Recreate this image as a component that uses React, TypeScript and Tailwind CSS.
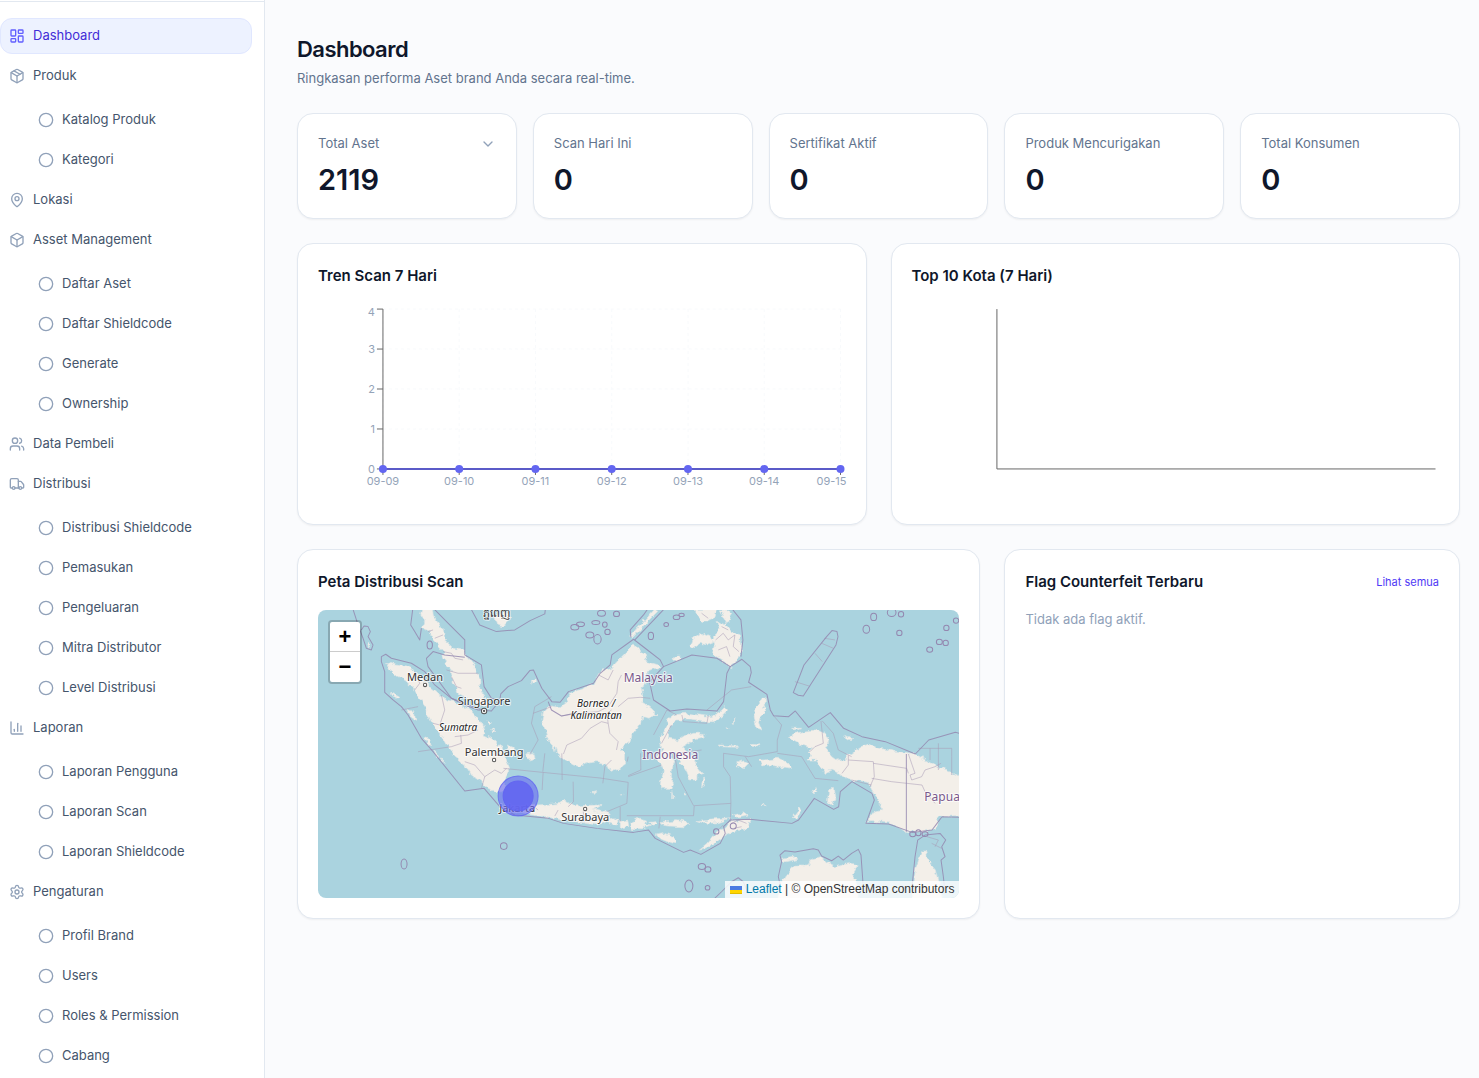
import {
  Box,
  ChartColumn,
  ChevronDown,
  Circle,
  LayoutDashboard,
  MapPin,
  Package,
  Settings,
  Truck,
  Users,
  type LucideIcon,
} from 'lucide-react';

interface MenuItem {
  label: string;
  icon: LucideIcon;
  active?: boolean;
  children?: string[];
}

const menu: MenuItem[] = [
  { label: 'Dashboard', icon: LayoutDashboard, active: true },
  { label: 'Produk', icon: Package, children: ['Katalog Produk', 'Kategori'] },
  { label: 'Lokasi', icon: MapPin },
  {
    label: 'Asset Management',
    icon: Box,
    children: ['Daftar Aset', 'Daftar Shieldcode', 'Generate', 'Ownership'],
  },
  { label: 'Data Pembeli', icon: Users },
  {
    label: 'Distribusi',
    icon: Truck,
    children: ['Distribusi Shieldcode', 'Pemasukan', 'Pengeluaran', 'Mitra Distributor', 'Level Distribusi'],
  },
  {
    label: 'Laporan',
    icon: ChartColumn,
    children: ['Laporan Pengguna', 'Laporan Scan', 'Laporan Shieldcode'],
  },
  {
    label: 'Pengaturan',
    icon: Settings,
    children: ['Profil Brand', 'Users', 'Roles & Permission', 'Cabang'],
  },
];

const stats = [
  { label: 'Total Aset', value: 2119, expandable: true },
  { label: 'Scan Hari Ini', value: 0 },
  { label: 'Sertifikat Aktif', value: 0 },
  { label: 'Produk Mencurigakan', value: 0 },
  { label: 'Total Konsumen', value: 0 },
];

const days = ['09-09', '09-10', '09-11', '09-12', '09-13', '09-14', '09-15'];

function Sidebar() {
  return (
    <aside className="w-[265px] shrink-0 overflow-hidden border-r border-slate-200 bg-white pt-px">
      <nav className="border-t border-slate-200 pt-4 pr-3">
        <ul className="space-y-1">
          {menu.map(({ label, icon: Icon, active, children }) => (
            <li key={label}>
              <a
                href="#"
                className={
                  active
                    ? 'flex h-9 items-center gap-2 rounded-xl border border-indigo-100 bg-[#edf2ff] px-2 text-indigo-700'
                    : 'flex h-9 items-center gap-2 rounded-xl border border-transparent px-2 text-slate-600'
                }
              >
                <Icon className={active ? 'size-4 text-indigo-500' : 'size-4 text-slate-400'} />
                <span className="pb-0.5">{label}</span>
              </a>
              {children && (
                <ul className="mt-2 ml-7 space-y-1">
                  {children.map((child) => (
                    <li key={child}>
                      <a href="#" className="flex h-9 items-center gap-2 px-2.5 text-slate-600">
                        <Circle className="size-4 text-slate-400" />
                        <span className="pb-0.5">{child}</span>
                      </a>
                    </li>
                  ))}
                </ul>
              )}
            </li>
          ))}
        </ul>
      </nav>
    </aside>
  );
}

function Card({ className = '', children }: { className?: string; children: React.ReactNode }) {
  return (
    <section className={`rounded-2xl border border-slate-200 bg-white p-5 shadow-xs ${className}`}>
      {children}
    </section>
  );
}

function CardTitle({ children }: { children: React.ReactNode }) {
  return <h2 className="text-[15px] leading-6 font-semibold text-slate-900">{children}</h2>;
}

function TrendChart() {
  const x = (i: number) => 65 + (i * 458) / 6;
  return (
    <svg viewBox="0 0 528 200" className="mt-1 h-[200px] w-full overflow-visible" role="img" aria-label="Tren Scan 7 Hari">
      <g stroke="#f8fafc" strokeDasharray="3 3">
        {[0, 1, 2, 3].map((i) => (
          <line key={i} x1="65" x2="523" y1={5 + i * 40} y2={5 + i * 40} />
        ))}
        {days.map((d, i) => (
          <line key={d} x1={x(i)} x2={x(i)} y1="5" y2="165" />
        ))}
      </g>
      <g stroke="#666">
        <line x1="65" x2="65" y1="5" y2="165" />
        <line x1="65" x2="523" y1="165" y2="165" />
        {[0, 1, 2, 3, 4].map((i) => (
          <line key={i} x1="59" x2="65" y1={5 + i * 40} y2={5 + i * 40} />
        ))}
        {days.map((d, i) => (
          <line key={d} x1={x(i)} x2={x(i)} y1="165" y2="171" />
        ))}
      </g>
      <g fill="#94a3b8" className="text-[11px]">
        {[4, 3, 2, 1, 0].map((v, i) => (
          <text key={v} x="57" y={i === 0 ? 12 : 9 + i * 40} textAnchor="end">
            {v}
          </text>
        ))}
        {days.map((d, i) => (
          <text key={d} x={i === 6 ? 514 : x(i)} y="181" textAnchor="middle">
            {d}
          </text>
        ))}
      </g>
      <line x1="65" x2="523" y1="165" y2="165" stroke="#5b5bc8" strokeWidth="2" />
      {days.map((d, i) => (
        <circle key={d} cx={x(i)} cy="165" r="4" fill="#6366f1" />
      ))}
    </svg>
  );
}

function CityChart() {
  return (
    <svg viewBox="0 0 528 200" className="mt-1 h-[200px] w-full" role="img" aria-label="Top 10 Kota">
      <path d="M85 5V165H524" fill="none" stroke="#666" />
    </svg>
  );
}

// Coastlines and maritime borders are drawn on a 1923 x 864 grid
const land = [
  // Malay peninsula
  'M315 -20L345 -10 350 25 375 60 380 90 405 115 435 120 445 140 470 170 485 205 485 235 500 265 515 288 490 285 450 265 420 250 405 215 400 185 385 165 375 140 380 125 365 110 345 90 335 65 310 55 320 35 308 15Z',
  // Sumatra
  'M205 157L230 165 265 168 290 185 330 225 370 255 380 270 410 275 450 295 470 315 490 340 500 360 495 375 520 385 540 405 556 415 565 450 575 480 565 495 558 530 552 545 532 545 510 535 490 515 460 495 440 465 410 440 385 402 370 375 350 355 330 315 325 295 300 260 285 235 265 215 240 200 215 180Z',
  // Borneo
  'M946 100L961 120 981 135 986 155 1021 165 1026 175 986 185 981 200 991 215 971 230 976 255 971 275 996 295 1016 315 991 325 971 320 966 345 941 375 936 395 906 415 922 430 922 462 906 472 876 485 866 462 836 455 806 460 786 470 766 465 736 448 716 432 711 412 700 400 686 385 681 355 671 335 676 305 696 285 726 290 746 275 756 250 796 235 826 225 841 195 856 180 881 175 896 155 916 135 936 115Z',
  // Sulawesi
  'M1041 355L1051 325 1066 315 1106 310 1176 320 1206 305 1221 290 1231 300 1211 320 1186 335 1156 335 1116 330 1076 330 1056 345 1051 380 1056 385 1081 390 1096 380 1126 370 1156 370 1161 380 1136 385 1116 395 1091 410 1106 425 1126 440 1136 470 1151 490 1136 495 1136 510 1116 510 1106 485 1086 455 1076 430 1066 420 1056 430 1066 455 1061 470 1056 500 1066 520 1061 538 1031 538 1026 520 1036 480 1026 460 1011 445 1026 425 1031 420 1026 385Z',
  // Java, Madura
  'M545 598L560 585 600 590 656 585 696 583 726 580 736 570 751 578 766 588 841 585 846 588 826 600 866 615 880 630 836 645 796 638 736 630 686 620 600 610Z',
  'M822 600L836 598 866 605 876 612 846 612Z',
  // Bali to Flores
  'M871 628L885 625 900 632 893 648 880 645ZM906 635L928 630 932 652 912 655ZM938 638L960 625 985 630 982 645 1000 648 972 656 940 655ZM992 637L1016 635 1018 642 1000 646ZM1026 638L1076 632 1116 638 1096 650 1050 648 1032 645ZM1136 635L1180 630 1236 626 1200 638 1150 640ZM1245 615L1282 608 1290 615 1250 622Z',
  // Sumba, Timor
  'M1011 672L1036 667 1066 680 1078 692 1066 702 1050 696 1031 688ZM1141 720L1166 700 1181 680 1206 660 1221 655 1236 635 1296 630 1286 655 1246 665 1216 680 1196 695 1156 717Z',
  // Papua
  'M1411 380L1431 370 1461 363 1491 360 1521 370 1531 395 1521 415 1541 438 1561 452 1575 452 1590 436 1626 410 1651 403 1681 415 1720 422 1781 430 1821 450 1881 480 1940 505 1940 614 1881 620 1856 622 1861 640 1851 655 1811 665 1761 665 1721 640 1681 635 1646 635 1666 605 1691 598 1681 570 1661 540 1650 520 1600 510 1571 495 1541 480 1521 490 1496 450 1466 450 1481 437 1466 425 1486 415 1450 405 1430 395Z',
  // Northern Australia
  'M1376 880L1386 825 1400 800 1431 765 1471 765 1481 745 1506 740 1521 755 1551 770 1571 765 1601 760 1621 765 1611 780 1601 795 1616 815 1621 880ZM1390 745L1430 738 1435 748 1400 755ZM1781 880L1791 780 1801 750 1811 720 1821 720 1831 755 1851 780 1861 820 1875 880Z',
  // Philippines
  'M936 80L956 55 981 30 1012 -5 1018 5 985 38 960 65 942 85ZM1181 85L1206 60 1196 35 1226 45 1241 65 1266 75 1271 115 1256 155 1236 170 1211 150 1186 135 1191 105ZM1116 110L1126 85 1151 70 1181 85 1191 95 1166 105 1146 100 1121 116ZM1130 0L1196 -5 1186 25 1156 35 1140 25ZM1205 0L1230 0 1240 30 1225 38ZM1060 145L1080 135 1090 145 1070 155Z',
  // Halmahera, Seram, Buru
  'M1331 265L1341 265 1341 285 1331 295 1346 292 1341 305 1326 320 1321 335 1331 360 1316 355 1311 335 1306 305 1316 285ZM1302 400L1322 402 1325 408 1304 406ZM1321 450L1341 450 1381 445 1411 460 1416 475 1391 470 1351 465 1331 468ZM1256 460L1276 452 1291 460 1276 475 1256 470ZM1420 355L1450 355 1430 362ZM1580 375L1600 385 1590 390Z',
  // Aru, Tanimbar
  'M1531 540L1548 532 1552 560 1538 588 1528 575ZM1422 620L1446 592 1450 600 1432 622ZM1480 545L1492 530 1495 538 1484 552Z',
  // Cambodia, Natuna, Bangka, Belitung
  'M530 20L560 10 578 25 555 50 535 45ZM640 212L650 205 652 215 642 225ZM565 405L585 412 592 432 580 440 572 425ZM626 432L645 428 648 445 632 450Z',
  // Islands west of Sumatra
  'M220 248L245 262 240 268 222 256ZM270 298L290 310 292 328 278 320ZM318 382L335 388 340 408 325 400ZM345 420L362 436 358 440 347 428ZM366 440L384 460 380 464ZM148 97L158 110 152 115Z',
  // Scattered islets
  'M820 548L836 545 832 550ZM905 552L915 550 908 556ZM1064 545L1067 565 1063 566ZM1100 548L1105 552 1100 556ZM1158 500L1160 520 1150 535 1154 505ZM1200 405L1255 408 1258 412 1205 410ZM1245 340L1250 325 1248 345ZM1225 355L1232 352 1230 360ZM508 330L520 335 512 345ZM518 355L530 358 520 366ZM1335 582L1340 590 1333 590Z',
];

const borders = [
  'M336 -15L395 45 440 90 440 135 490 165 498 230 520 265 545 272 548 252 570 230 610 212 635 182 646 180 671 235 701 275 726 277 751 245 826 220 846 190 876 165 881 135 946 88 981 115 1026 150 1036 170 1121 135 1196 145 1236 170 1271 148 1296 170 1299 188 1291 217 1346 253 1356 300 1366 317 1411 320 1431 303 1471 352 1536 308 1576 355 1631 380 1701 395 1791 432 1831 390 1911 367 1923 370',
  'M545 272L520 303 480 300 440 285 400 265 330 170 325 145 345 125 380 135 440 142',
  'M500 303L400 265 350 225 320 185 280 160 220 145 203 133 190 140 190 155 200 185 200 247 225 270 250 290 270 315 310 385 345 425 440 543 498 535 545 590 590 615 691 625 736 640 836 655 946 667 991 660 1011 685 1096 727 1116 720 1148 733 1206 700 1221 670 1216 650 1236 630 1296 628 1421 640 1441 630 1488 565 1546 598 1561 590 1566 545 1601 515 1661 550 1668 570 1643 640 1711 642 1781 667 1841 660 1856 640 1871 620 1923 622',
  'M1236 170L1226 190 1216 275 1196 303 1106 297 1056 303 1006 270 994 215 1036 170',
  'M285 -10L278 45 290 65 305 90 310 55',
  'M455 -10L485 45 535 65 590 60 636 32 680 12 682 -5',
  'M104 -5L120 45 135 85 145 115 160 120 165 105 150 80 157 65 150 50 138 48 130 60',
  'M938 82L936 60 976 15 990 -5M950 90L1040 -5',
  'M690 275L700 300 730 318 770 310',
  'M1240 -5L1268 30 1274 90 1268 140',
  'M1425 248L1457 165 1525 80 1541 62 1556 65 1559 80 1553 105 1455 258 1440 256Z',
  'M1386 825L1380 800 1390 755 1385 735 1400 722 1430 726 1485 716 1500 720 1510 738 1540 752 1560 738 1575 750 1600 730 1620 718 1628 735 1634 820',
  'M1781 830L1790 740 1798 690 1820 675 1865 670 1882 690 1870 710 1880 740 1868 750 1875 800 1880 850',
  'M1190 864L1210 845 1240 815 1260 803 1275 815 1290 850',
];

const provinces = [
  'M345 60L330 65M350 85L375 75M375 125L400 130 410 145 435 150M385 180L420 190 480 190M400 200L415 230 430 235',
  'M290 185L305 220 290 240M370 255L380 300 365 345 345 340M410 380L450 375 480 360M400 410L430 400 428 375M490 535L500 500 530 480 550 490 565 475M440 455L470 465 500 500',
  'M841 195L870 210 885 180M910 195L900 215 896 250 870 290 840 305 780 310 730 318M900 290L930 265 966 262 996 265M870 340L866 310 880 300M736 432L746 405 790 385 816 355 850 335 870 340 875 370 900 395 895 420',
  'M765 515L766 575 750 590M556 475L672 487 846 504 930 517 926 580 866 605M675 487L672 540',
  'M906 590L906 635M1026 620L1022 655M926 617L1126 617 1128 587 1238 580 1236 635M1126 587L1080 500 1072 450M930 500L1030 465M1238 580L1236 500 1216 470 1216 430 1291 440 1377 425 1377 390 1390 345 1366 317',
  'M731 430L732 510M854 520L860 470 880 450M967 430L968 480 930 497M674 485L680 430',
  'M645 310L700 290M636 432L660 390 640 340 650 290 700 260M400 410L300 425M250 300L300 290',
  'M1006 375L1046 300 1076 315M1166 300L1240 240 1299 230M1091 315L1095 335 1166 340 1170 318',
  'M1508 333L1515 400 1490 410 1475 425M1512 333L1545 370 1560 420 1600 440M1571 490L1590 465 1590 436M1600 510L1660 525M1590 450L1665 455 1668 500 1655 530M1665 460L1765 475 1770 490M1660 505L1720 515 1811 525M1770 432L1790 490 1775 495 1780 510 1810 500 1820 480 1850 470 1868 460M1811 525L1820 545 1850 580M1800 415L1900 415 1900 440M1835 415L1835 450M1860 400L1860 480M1900 440L1900 495',
  'M1377 430L1450 440 1490 505 1560 512M1281 440L1300 470',
  'M1430 215L1472 228M1490 130L1512 155M1518 85L1550 90M1510 100L1545 115',
  'M1192 90L1215 70 1230 90 1250 75 1245 110 1262 125M1200 120L1225 110 1235 140M1210 50L1230 60M1150 10L1170 25',
  'M1240 640L1260 630 1285 640M1246 655L1270 650M1215 645L1200 660',
  'M565 600L575 592M645 588L660 600M710 618L720 600M795 605L800 635M930 440L927 455M1075 430L1150 420',
  'M1826 680L1860 690 1850 710M1840 700L1870 715M1060 345L1030 400',
];

// cx, cy, rx, ry
const reefs = [
  [770, 52, 12, 8], [787, 43, 12, 7], [815, 75, 12, 9], [838, 88, 11, 14], [850, 10, 12, 9], [860, 44, 7, 8],
  [833, 38, 12, 6], [868, 66, 8, 8], [895, 12, 9, 8], [1075, 22, 10, 7], [1090, 15, 8, 5], [1044, 44, 7, 6],
  [998, 78, 8, 11], [1666, 21, 9, 11], [1644, 58, 10, 12], [1720, 8, 13, 12], [1748, 13, 8, 8], [1743, 69, 8, 8],
  [1834, 119, 9, 8], [1863, 96, 9, 8], [1882, 99, 8, 8], [1884, 54, 8, 8], [1913, 32, 8, 8],
  [258, 762, 9, 15], [557, 708, 10, 10], [1151, 769, 11, 9], [1169, 778, 9, 8], [1112, 828, 12, 18], [1168, 833, 7, 7],
  [1194, 664, 8, 8], [335, 105, 8, 12], [1783, 672, 9, 8], [1800, 668, 8, 9], [1820, 672, 9, 7], [1245, 648, 9, 9],
];

const places = [
  { name: 'Medan', x: 107, y: 71 },
  { name: 'Singapore', x: 166, y: 95 },
  { name: 'Palembang', x: 176, y: 146 },
  { name: 'Surabaya', x: 267, y: 211 },
  { name: 'Jakarta', x: 199, y: 202 },
  { name: 'ភ្នំពេញ', x: 178, y: 7 },
];

function ScanMap() {
  return (
    <div className="relative isolate mt-4 h-72 overflow-hidden rounded-lg bg-[#aad3df]">
      <svg viewBox="0 0 641 288" preserveAspectRatio="xMidYMid slice" className="size-full" role="img" aria-label="Peta Indonesia">
        <defs>
          <filter id="coast" x="0" y="0" width="100%" height="100%">
            <feTurbulence type="fractalNoise" baseFrequency="0.16" numOctaves="3" seed="4" />
            <feDisplacementMap in="SourceGraphic" scale="6" xChannelSelector="R" yChannelSelector="G" />
          </filter>
        </defs>
        <g filter="url(#coast)">
          <g transform="scale(0.33333)" fill="#f3efe9" stroke="#dfe6e6" strokeWidth="2" strokeLinejoin="round">
            {land.map((d) => (
              <path key={d} d={d} />
            ))}
          </g>
        </g>
        <g transform="scale(0.33333)" fill="none" strokeLinejoin="round">
          <g stroke="#a99ab5" strokeOpacity="0.8" strokeWidth="2">
            {provinces.map((d) => (
              <path key={d} d={d} />
            ))}
          </g>
          <g stroke="#9488b0" strokeOpacity="0.85" strokeWidth="3">
            {borders.map((d) => (
              <path key={d} d={d} />
            ))}
            <path d="M1764 432V665" />
          </g>
          <g stroke="#9488b0" strokeWidth="3">
            {reefs.map(([cx, cy, rx, ry]) => (
              <ellipse key={`${cx}-${cy}`} cx={cx} cy={cy} rx={rx} ry={ry} />
            ))}
          </g>
          <g fill="#fff" stroke="#555" strokeWidth="3">
            <circle cx="321" cy="225" r="5" />
            <circle cx="528" cy="450" r="5" />
            <circle cx="801" cy="597" r="5" />
            <circle cx="498" cy="303" r="8" />
            <circle cx="498" cy="303" r="2" />
          </g>
        </g>
        <g
          textAnchor="middle"
          stroke="#fff"
          strokeOpacity="0.7"
          strokeWidth="2"
          strokeLinejoin="round"
          paintOrder="stroke"
          className="font-['Noto_Sans',sans-serif]"
        >
          <g fill="#333" className="text-[11px]">
            {places.map((p) => (
              <text key={p.name} x={p.x} y={p.y}>
                {p.name}
              </text>
            ))}
          </g>
          <g fill="#222" className="text-[10px] italic">
            <text x="140" y="121">Sumatra</text>
            <text x="278" y="97">Borneo /</text>
            <text x="278" y="109">Kalimantan</text>
          </g>
          <g fill="#7a5a8c" className="text-[12px]">
            <text x="330" y="72">Malaysia</text>
            <text x="352" y="149">Indonesia</text>
            <text x="606" y="191" textAnchor="start">Papua</text>
          </g>
        </g>
        <g fill="#6366f1" stroke="#6366f1">
          <circle cx="200" cy="186" r="20" fillOpacity="0.6" strokeOpacity="0.8" />
          <circle cx="200" cy="186" r="15" fillOpacity="0.9" />
        </g>
      </svg>

      {/* Zoom control */}
      <div className="absolute top-2.5 left-2.5 flex flex-col rounded-sm border-2 border-black/20 bg-white bg-clip-padding font-['Liberation_Sans',sans-serif] text-[22px] leading-[30px] font-bold text-black">
        <button type="button" aria-label="Zoom in" className="size-[30px] border-b border-[#ccc]">
          +
        </button>
        <button type="button" aria-label="Zoom out" className="size-[30px]">
          −
        </button>
      </div>

      {/* Attribution */}
      <div className="absolute right-0 bottom-0 flex items-center bg-white/80 px-[5px] font-['Liberation_Sans',sans-serif] text-xs leading-[17px] text-[#333]">
        <a href="#" className="flex items-center gap-1 text-[#0078a8]">
          <svg viewBox="0 0 12 8" className="h-2 w-3">
            <path fill="#4C7BE1" d="M0 0h12v4H0z" />
            <path fill="#FFD500" d="M0 4h12v3H0z" />
            <path fill="#E0BC00" d="M0 7h12v1H0z" />
          </svg>
          Leaflet
        </a>
        <span className="whitespace-pre"> | © OpenStreetMap contributors</span>
      </div>
    </div>
  );
}

export default function App() {
  return (
    <div className="flex h-screen overflow-hidden bg-[#fafbfd] font-['Inter',sans-serif] text-[13px] leading-5">
      <Sidebar />
      <main className="min-w-0 flex-1 overflow-hidden py-8 pr-[19px] pl-8">
        <h1 className="pt-px text-[22px] leading-8 font-semibold tracking-tight text-slate-900">Dashboard</h1>
        <p className="mt-1 pb-0.5 leading-[18px] text-slate-500">Ringkasan performa Aset brand Anda secara real-time.</p>

        {/* Stats */}
        <div className="mt-6 grid grid-cols-5 gap-4">
          {stats.map((stat) => (
            <Card key={stat.label}>
              <div className="flex items-center justify-between text-slate-500">
                <span className="pb-0.5 leading-[18px]">{stat.label}</span>
                {stat.expandable && (
                  <button type="button" aria-label="Detail">
                    <ChevronDown className="size-4 text-slate-400" />
                  </button>
                )}
              </div>
              <div className="mt-2 text-[29px] leading-9 font-semibold text-slate-900">{stat.value}</div>
            </Card>
          ))}
        </div>

        {/* Charts */}
        <div className="mt-6 grid grid-cols-2 gap-6">
          <Card>
            <CardTitle>Tren Scan 7 Hari</CardTitle>
            <div className="h-[216px] pt-3">
              <TrendChart />
            </div>
          </Card>
          <Card>
            <CardTitle>Top 10 Kota (7 Hari)</CardTitle>
            <div className="h-[216px] pt-3">
              <CityChart />
            </div>
          </Card>
        </div>

        {/* Map and flags */}
        <div className="mt-6 grid grid-cols-[3fr_2fr] gap-6">
          <Card className="min-w-0">
            <CardTitle>Peta Distribusi Scan</CardTitle>
            <ScanMap />
          </Card>
          <Card>
            <div className="flex items-center justify-between">
              <CardTitle>Flag Counterfeit Terbaru</CardTitle>
              <a href="#" className="text-[11px] text-indigo-600">
                Lihat semua
              </a>
            </div>
            <p className="mt-4 pb-0.5 leading-[18px] text-slate-400">Tidak ada flag aktif.</p>
          </Card>
        </div>
      </main>
    </div>
  );
}
